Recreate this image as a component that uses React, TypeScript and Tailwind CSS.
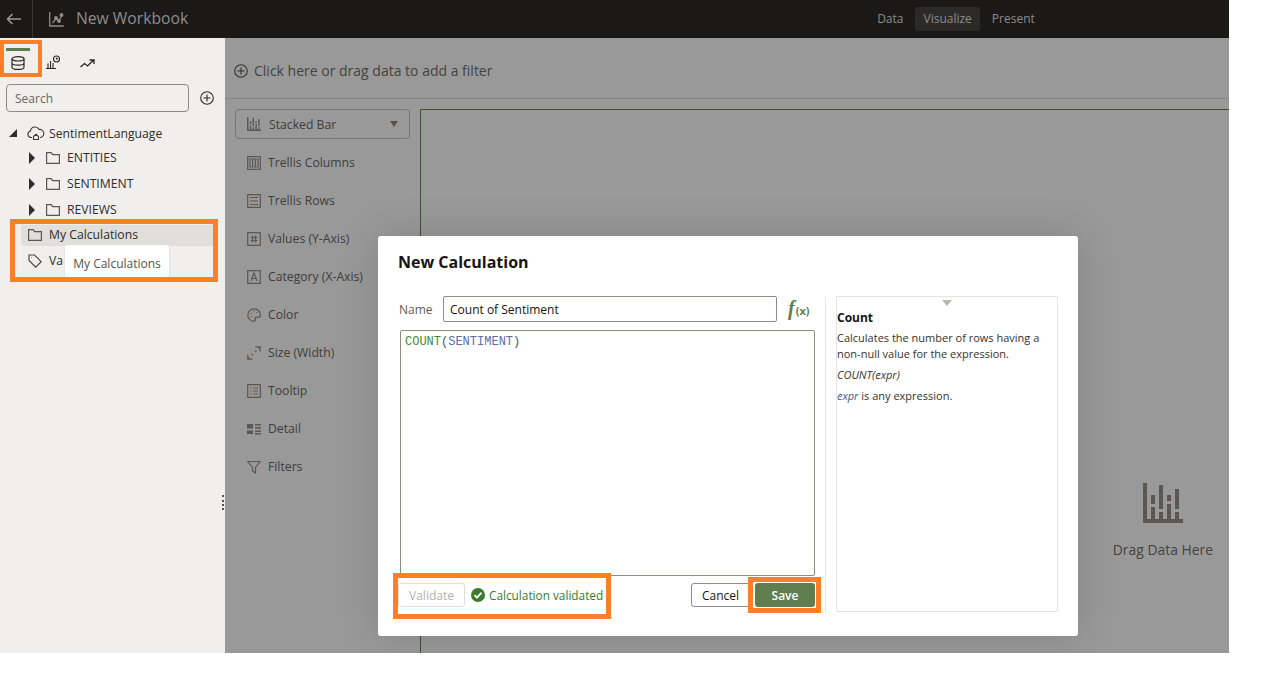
import React from "react";

function Folder() {
  return (
    <svg width="14" height="14" viewBox="0 0 14 14" fill="none" stroke="#5b5650" strokeWidth="1.2" className="shrink-0">
      <path d="M.6 12.400V1.600h4.600l1.400 2h6.800v8.800z" />
    </svg>
  );
}

function Caret() {
  return <span className="h-0 w-0 border-y-[6px] border-l-[6px] border-y-transparent border-l-[#2f2c2a]" />;
}

function TreeRow({ label, top }: { label: string; top: string }) {
  return (
    <div className={`flex items-center ${top}`}>
      <span className="ml-[29px] flex w-[17px]"><Caret /></span>
      <Folder />
      <span className="ml-[7px] text-[12.2px] text-[#2f2c2a]">{label}</span>
    </div>
  );
}

function BarsIcon({ size = 14, color = "#5c5753" }: { size?: number; color?: string }) {
  return (
    <svg width={size} height={size} viewBox="0 0 40 40" fill={color} className="shrink-0">
      <path d="M0 0h4v36H0zM8 12h4v9H8zM8 24h4v12H8zM16 2h4v24h-4zM16 29h4v7h-4zM24 12h4v6h-4zM24 21h4v15h-4zM32 6h4v20h-4zM32 29h4v7h-4zM0 36h40v4H0z" />
    </svg>
  );
}

const box = "M.7.7h12.600v12.600H.7z";

const shelfIcons: Record<string, React.ReactNode> = {
  "Trellis Columns": <path d={`${box}M3 3h8v8H3zM5.600 3v8M8.400 3v8`} />,
  "Trellis Rows": <path d={`${box}M3 3.500h8M3 7h8M3 10.500h8`} />,
  "Values (Y-Axis)": <path d={`${box}M5.500 3.500v7M8.500 3.500v7M3.500 5.500h7M3.500 8.500h7`} />,
  "Category (X-Axis)": <path d={`${box}M4 11l3-8 3 8M5 8.500h4`} />,
  Color: <path d="M7 .8a6.200 6.200 0 1 0 0 12.400c1.600 0 1.800-1.200 1.200-2-.6-1 .1-2 1.200-2h2.200c1.200 0 1.800-.8 1.800-2C13.400 3.200 10.500.8 7 .8zM3.500 5.500h1M6 3.200h1M3.800 8.500h1M9.500 4.500h1" />,
  "Size (Width)": <path d="M.8 8.500v4.700h4.700M.8 13.200l1.800-1.800M4.500 9.500l1.500-1.500M8 6l1.500-1.500M11.400 2.600l1.800-1.800M8.500.8h4.700v4.700" />,
  Tooltip: <path d={`${box}M3 4h1.500M6 4h5M3 7h1.500M6 7h5M3 10h1.500M6 10h5`} />,
  Detail: (
    <path
      fill="#5c5753"
      stroke="none"
      d="M0 2h6v4.500H0zM0 8.500h6V12H0zM8 2h6v1.500H8zM8 5h6v1.500H8zM8 8.500h6V10H8zM8 11h6v1.500H8z"
    />
  ),
  Filters: <path d="M.7 1.500h12.600L8.500 7.500v5.500l-3-2V7.500z" />,
};

const shelves = Object.keys(shelfIcons);

function Highlight({ className }: { className: string }) {
  return <div className={`absolute border-[#ff7f27] ${className}`} />;
}

export default function App() {
  return (
    <div className="h-[680px] w-[1288px] overflow-hidden bg-white font-['Open_Sans','Noto_Sans',sans-serif]">
      <div className="relative flex h-[653px] w-[1229px] flex-col overflow-hidden">
        {/* Top bar */}
        <header className="relative flex h-[38px] shrink-0 items-center bg-[#1a1918]">
          <div className="flex h-full w-[33px] items-center justify-center border-r border-[#3a3836] pr-[5px]">
            <svg width="15" height="12" viewBox="0 0 15 12" fill="none" stroke="#9a9896" strokeWidth="1.6">
              <path d="M15 6H1.500M6.500 1 1.500 6l5 5" />
            </svg>
          </div>
          <svg width="15" height="15" viewBox="0 0 15 15" fill="none" stroke="#8f8d8a" strokeWidth="1.3" className="ml-[16px]">
            <path d="M.7 0v14h14" />
            <path d="M3.500 11 7 6.500 9.500 9 13 3.500" />
            <circle cx="7" cy="6" r="1.3" fill="#8f8d8a" />
            <circle cx="10" cy="9" r="1.3" fill="#8f8d8a" />
            <circle cx="12.5" cy="3" r="1.3" fill="#8f8d8a" />
          </svg>
          <span className="ml-[12px] text-[15.7px] text-[#8f8d8b]">New Workbook</span>
          <nav className="ml-[689px] flex items-center text-[12px] text-[#8e8c8a]">
            <span>Data</span>
            <span className="ml-[12px] flex h-[24px] items-center rounded-[3px] bg-[#2b2a29] px-[8px]">Visualize</span>
            <span className="ml-[12px]">Present</span>
          </nav>
        </header>

        <div className="flex min-h-0 flex-1">
          {/* Data panel */}
          <aside className="relative w-[225px] shrink-0 bg-[#f0efed]">
            <div className="flex h-[33px] items-end">
              <div className="ml-[6px] flex w-[24px] flex-col items-center">
                <span className="mb-[5px] h-[3px] w-full bg-[#5f7d4f]" />
                <svg width="14" height="14" viewBox="0 0 14 14" fill="none" stroke="#2b2826" strokeWidth="1.2" className="mb-[1px]">
                  <ellipse cx="7" cy="2.800" rx="6" ry="2.200" />
                  <path d="M1 2.800v8.400c0 1.200 2.700 2.200 6 2.200s6-1 6-2.200V2.800M1 7c0 1.200 2.700 2.200 6 2.200s6-1 6-2.200" />
                </svg>
              </div>
              <svg width="15" height="15" viewBox="0 0 15 15" fill="none" stroke="#2b2826" strokeWidth="1.1" className="mb-[1px] ml-[16px]">
                <path d="M0 13.500h10M2 13V8.500M4.500 13V6M7 13V8" />
                <circle cx="10.500" cy="4" r="3" />
                <path d="M10.500 2.500V4h1.500" />
              </svg>
              <svg width="15" height="10" viewBox="0 0 15 10" fill="none" stroke="#2b2826" strokeWidth="1.3" className="mb-[2px] ml-[19px]">
                <path d="M.5 8 4.500 4.500 7.500 7 13.500 1.200M9.500 1h4.500v4" />
              </svg>
            </div>
            <div className="mt-[13px] flex items-center">
              <div className="ml-[6px] flex h-[28px] w-[183px] items-center rounded-[4px] border border-[#8f8a85] bg-[#f0efed] px-[8px] pt-[1px] text-[12px] text-[#6b6763]">
                Search
              </div>
              <svg width="14" height="14" viewBox="0 0 14 14" fill="none" stroke="#2b2826" strokeWidth="1.1" className="ml-[11px]">
                <circle cx="7" cy="7" r="6.3" />
                <path d="M7 3.500v7M3.500 7h7" />
              </svg>
            </div>
            <div className="mt-[12px] flex h-[18px] items-center">
              <span className="ml-[9px] h-0 w-0 border-b-[8px] border-l-[8px] border-b-[#2f2c2a] border-l-transparent" />
              <svg width="18" height="14" viewBox="0 0 18 14" fill="none" stroke="#3c3936" strokeWidth="1.1" className="ml-[10px]">
                <path d="M5 11.500H4A3.300 3.300 0 0 1 3.500 5a4.500 4.500 0 0 1 8.500-1.500 3.800 3.800 0 0 1 1.500 8H13" />
                <path d="M6.500 10.500 9 8.300l2.500 2.200v3h-5z" />
              </svg>
              <span className="ml-[4px] pt-[2px] text-[12.2px] text-[#2f2c2a]">SentimentLanguage</span>
            </div>
            <TreeRow label="ENTITIES" top="mt-[7px]" />
            <TreeRow label="SENTIMENT" top="mt-[8px]" />
            <TreeRow label="REVIEWS" top="mt-[7px]" />
            <div className="ml-[21px] mt-[6px] flex h-[21px] w-[193px] items-center rounded-l-[3px] bg-[#e0dfdb] pl-[7px]">
              <Folder />
              <span className="ml-[7px] text-[12.2px] text-[#2f2c2a]">My Calculations</span>
            </div>
            <div className="ml-[28px] mt-[6px] flex h-[18px] items-center">
              <svg width="14" height="14" viewBox="0 0 14 14" fill="none" stroke="#4d4945" strokeWidth="1.2">
                <path d="M1 1h5.500l6.700 6.700-5.500 5.500L1 6.500zM3.500 3.500h.6" />
              </svg>
              <span className="ml-[7px] text-[12.2px] text-[#2f2c2a]">Va</span>
            </div>
            {/* Sash grip */}
            <div className="absolute left-[222px] top-[457px] h-[15px] w-[2px] border-l-2 border-dotted border-[#55524f]" />
          </aside>

          {/* Canvas area */}
          <main className="flex min-w-0 flex-1 flex-col bg-[#999999]">
            <div className="flex h-[61px] shrink-0 items-center border-b border-[#868686] pl-[9px] pt-[5px]">
              <svg width="14" height="14" viewBox="0 0 14 14" fill="none" stroke="#33312f" strokeWidth="1.1">
                <circle cx="7" cy="7" r="6.3" />
                <path d="M7 3.500v7M3.500 7h7" />
              </svg>
              <span className="ml-[6px] text-[14px] text-[#45423f]">Click here or drag data to add a filter</span>
            </div>
            <div className="flex min-h-0 flex-1">
              <div className="w-[195px] shrink-0 pl-[10px] pt-[10px]">
                <div className="flex h-[30px] w-[175px] items-center rounded-[4px] border border-[#777572] pl-[11px] pr-[11px]">
                  <BarsIcon />
                  <span className="ml-[8px] flex-1 pt-[2px] text-[12.2px] text-[#403d3b]">Stacked Bar</span>
                  <span className="h-0 w-0 border-x-[4.5px] border-t-[6px] border-x-transparent border-t-[#55524f]" />
                </div>
                <div className="mt-[5px] flex flex-col">
                  {shelves.map((name) => (
                    <div key={name} className="flex h-[38px] items-center pl-[12px]">
                      <svg width="14" height="14" viewBox="0 0 14 14" fill="none" stroke="#5c5753" strokeWidth="1.2" className="shrink-0">
                        {shelfIcons[name]}
                      </svg>
                      <span className="ml-[7px] text-[12.2px] text-[#403d3b]">{name}</span>
                    </div>
                  ))}
                </div>
              </div>
              <div className="mt-[10px] flex flex-1 items-end justify-end border-l border-t border-[#3f4f38] pb-[92px] pr-[16px]">
                <div className="flex flex-col items-center">
                  <BarsIcon size={40} />
                  <span className="mt-[17px] text-[13.9px] text-[#45423f]">Drag Data Here</span>
                </div>
              </div>
            </div>
          </main>
        </div>

        {/* Dialog */}
        <div className="absolute left-[378px] top-[236px] flex h-[400px] w-[700px] flex-col rounded-[3px] bg-white px-[20px] pb-[24px] pt-[15px] shadow-[0_0_40px_rgba(0,0,0,0.15)]">
          <h2 className="text-[16px] font-bold leading-[22px] text-[#161513]">New Calculation</h2>
          <div className="mt-[23px] flex min-h-0 flex-1">
            <div className="flex w-[417px] flex-col pl-[1px]">
              <div className="flex h-[26px] w-full items-center">
                <span className="w-[44px] pt-[2px] text-[12px] text-[#5f5b57]">Name</span>
                <div className="flex h-[26px] w-[334px] items-center rounded-[2px] border border-[#8f8a85] pl-[6px] pt-[1px] text-[12px] text-[#161513]">
                  Count of Sentiment
                </div>
                <span className="ml-[11px] flex items-baseline text-[#5f7d4f]">
                  <i className="font-['Liberation_Serif',serif] text-[20px] font-bold leading-[26px]">f</i>
                  <b className="ml-[1px] text-[11px] leading-[26px]">(x)</b>
                </span>
              </div>
              <div className="ml-[1px] mt-[8px] h-[246px] rounded-[2px] border border-[#8f8a85] px-[4px] py-[4px] font-['Liberation_Mono',monospace] text-[12px] leading-[14px]">
                <span className="text-[#3d8b37]">COUNT</span>
                <span className="text-[#555555]">(</span>
                <span className="text-[#5a6fa8]">SENTIMENT</span>
                <span className="text-[#555555]">)</span>
              </div>
              <div className="mt-[7px] flex items-center">
                <div className="ml-[-1px] flex h-[24px] w-[67px] items-center justify-center rounded-[3px] border border-[#dfdedc] pt-[1px] text-[12px] text-[#b5b2af]">
                  Validate
                </div>
                <svg width="14" height="14" viewBox="0 0 14 14" className="ml-[6px]">
                  <circle cx="7" cy="7" r="7" fill="#3c7a2c" />
                  <path d="M3.500 7.200 6 9.700l4.500-5" fill="none" stroke="#fff" strokeWidth="1.8" />
                </svg>
                <span className="ml-[4px] pt-[1px] text-[11.8px] text-[#2f7d32]">Calculation validated</span>
                <div className="ml-auto flex h-[24px] w-[59px] items-center justify-center rounded-[3px] border border-[#8f8a85] pt-[1px] text-[12px] text-[#161513]">
                  Cancel
                </div>
                <div className="ml-[5px] flex h-[24px] w-[60px] items-center justify-center rounded-[3px] bg-[#5f7d4f] pt-[1px] text-[12px] font-semibold text-white">
                  Save
                </div>
              </div>
            </div>
            <div className="ml-[10px] mt-[1px] w-px bg-[#e6e5e3]" />
            <div className="relative ml-[10px] w-[222px] border border-[#e6e5e3] pt-[12px] text-[11px] leading-[16px] text-[#35322f]">
              <span className="absolute left-[105px] top-[3px] h-0 w-0 border-x-[5px] border-t-[6px] border-x-transparent border-t-[#b8b6b4]" />
              <div className="text-[12px] font-bold leading-[18px] text-[#161513]">Count</div>
              <p className="mt-[3px] w-[210px]">Calculates the number of rows having a non-null value for the expression.</p>
              <p className="mt-[5px] italic">COUNT(expr)</p>
              <p className="mt-[5px]"><i className="text-[#3a5a8c]">expr</i> is any expression.</p>
            </div>
          </div>
        </div>

        {/* Tooltip */}
        <div className="absolute left-[65px] top-[245px] flex h-[32px] w-[104px] items-center justify-center rounded-[2px] bg-white pt-[5px] text-[12px] text-[#55524f] shadow-sm">
          My Calculations
        </div>

        {/* Annotation boxes */}
        <Highlight className="left-0 top-[40px] h-[37px] w-[42px] border-4" />
        <Highlight className="left-[10px] top-[219px] h-[63px] w-[208px] border-[5px]" />
        <Highlight className="left-[393px] top-[573px] h-[46px] w-[218px] border-[5px]" />
        <Highlight className="left-[748px] top-[577px] h-[36px] w-[73px] border-[5px]" />
      </div>
    </div>
  );
}
